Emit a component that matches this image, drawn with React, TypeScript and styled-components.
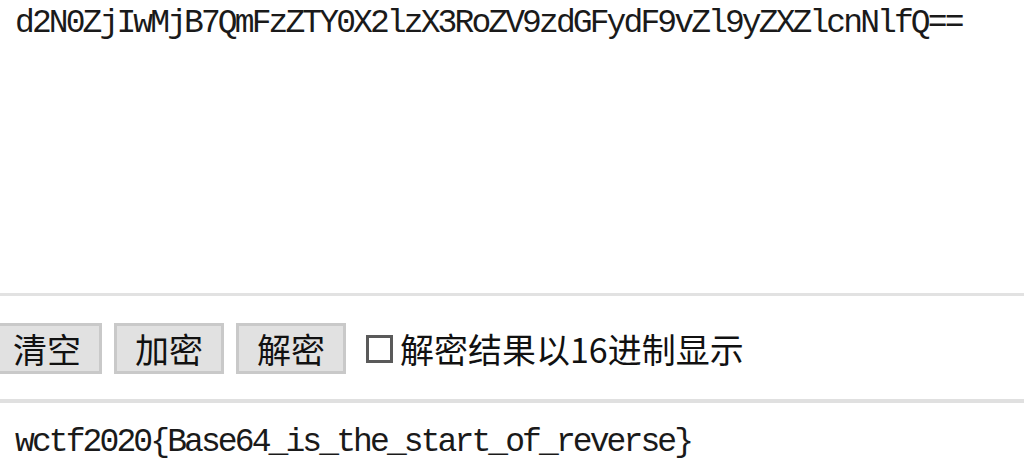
import React from "react";
import styled, { createGlobalStyle } from "styled-components";

const GlobalStyle = createGlobalStyle`
  html, body {
    margin: 0;
    padding: 0;
    background: #ffffff;
    overflow: hidden;
  }
`;

const Page = styled.div`
  width: 1024px;
  height: 475px;
  overflow: hidden;
  background: #ffffff;
`;

const TextPanel = styled.div<{ $tall?: boolean; $top?: boolean }>`
  box-sizing: border-box;
  height: ${(p) => (p.$tall ? "296px" : "auto")};
  padding: ${(p) => (p.$top ? "4px" : "20px")} 0 0 15px;
  border-bottom: ${(p) => (p.$tall ? "3px solid #e2e2e2" : "none")};
  border-top: ${(p) => (p.$tall ? "none" : "4px solid #e0e0e0")};
  font-family: "Liberation Mono", monospace;
  font-size: 33px;
  line-height: 40px;
  letter-spacing: -2.9px;
  color: #1a1a1a;
  white-space: nowrap;
`;

const Toolbar = styled.div`
  display: flex;
  align-items: center;
  gap: 12px;
  margin-left: -8px;
  padding: 27px 0 25px 0;
  font-family: "Noto Sans CJK SC", "Noto Sans", sans-serif;
`;

const Button = styled.button`
  box-sizing: border-box;
  width: 110px;
  height: 51px;
  padding: 0;
  background: #e1e1e1;
  border: 3px solid #c9c9c9;
  border-radius: 0;
  font-family: "Noto Sans CJK SC", sans-serif;
  font-size: 34px;
  line-height: 1;
  color: #111111;
`;

const CheckLabel = styled.label`
  display: flex;
  align-items: center;
  gap: 7px;
  margin-left: 8px;
  font-size: 34px;
  color: #111111;
`;

const Box = styled.span`
  box-sizing: border-box;
  width: 27px;
  height: 28px;
  border: 3px solid #5a5a5a;
  background: #ffffff;
`;

export default function App() {
  return (
    <Page>
      <GlobalStyle />
      <TextPanel $tall $top>
        d2N0ZjIwMjB7QmFzZTY0X2lzX3RoZV9zdGFydF9vZl9yZXZlcnNlfQ==
      </TextPanel>
      <Toolbar>
        <Button type="button">清空</Button>
        <Button type="button">加密</Button>
        <Button type="button">解密</Button>
        <CheckLabel>
          <Box />
          解密结果以16进制显示
        </CheckLabel>
      </Toolbar>
      <TextPanel>wctf2020{"{"}Base64_is_the_start_of_reverse{"}"}</TextPanel>
    </Page>
  );
}
